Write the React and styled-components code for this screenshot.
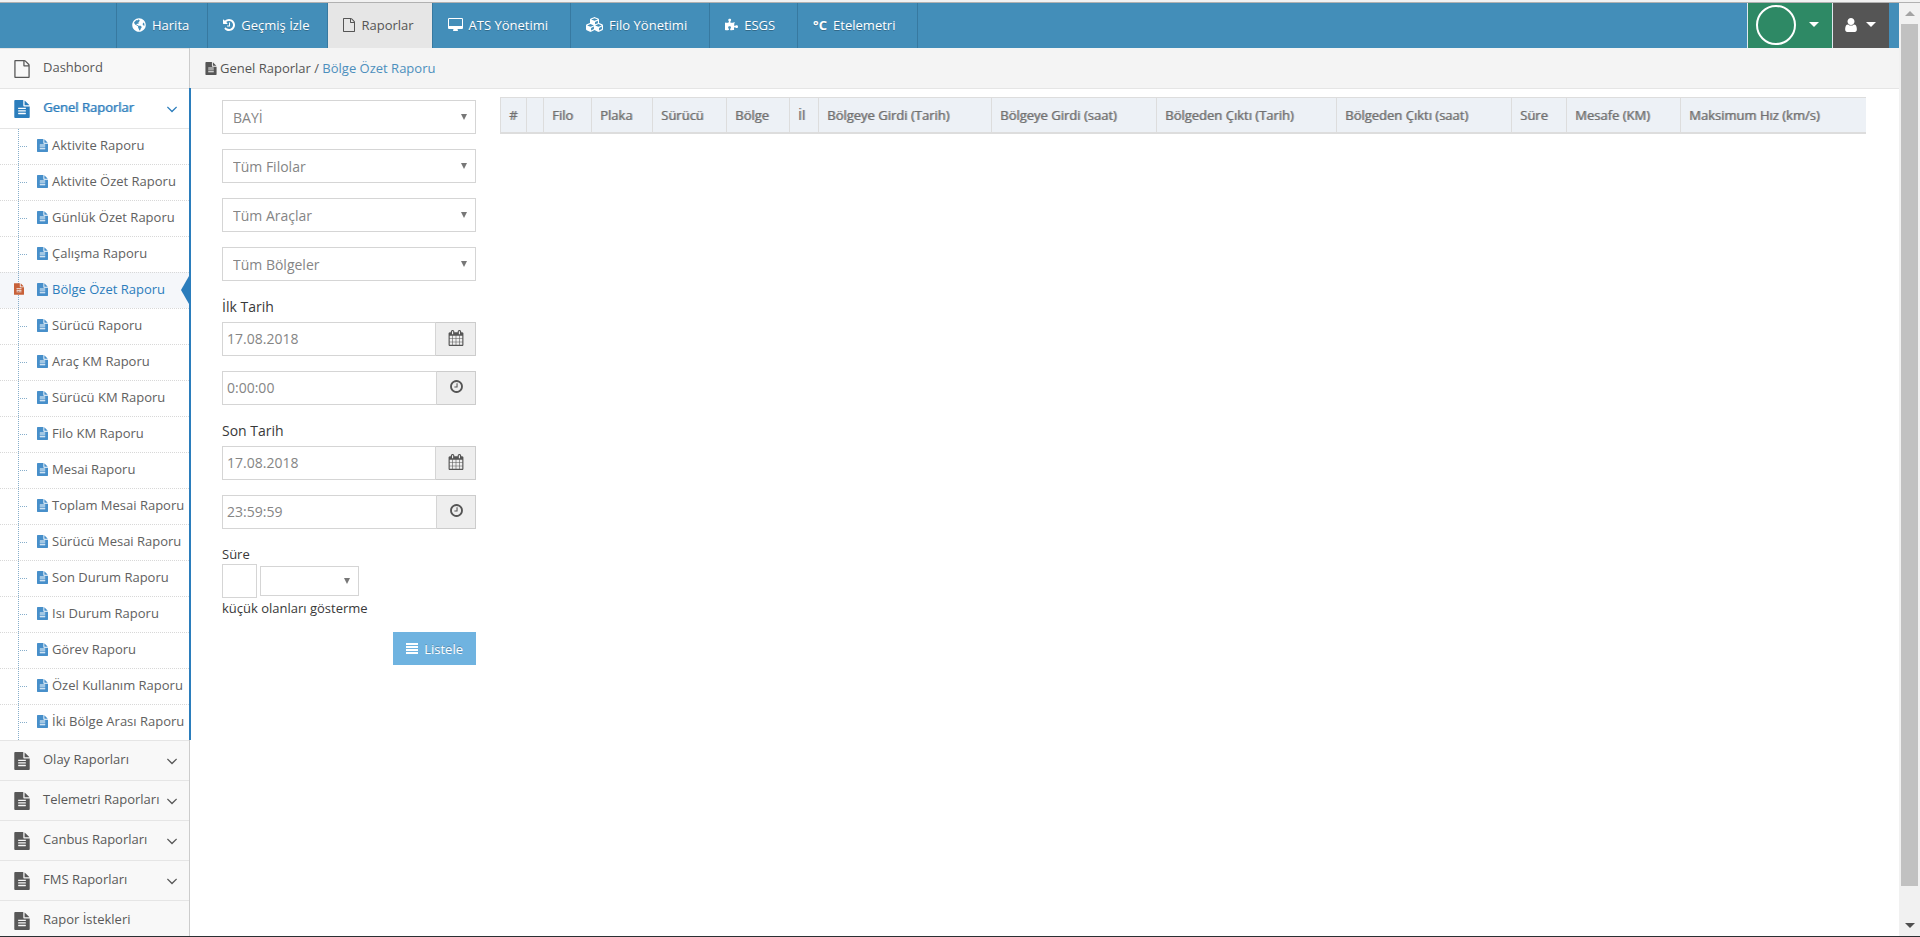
import React from 'react';
import styled, { createGlobalStyle, css } from 'styled-components';
import { FaGlobeAmericas, FaCubes, FaPuzzlePiece } from 'react-icons/fa';

const reports = [
  'Aktivite Raporu',
  'Aktivite Özet Raporu',
  'Günlük Özet Raporu',
  'Çalışma Raporu',
  'Bölge Özet Raporu',
  'Sürücü Raporu',
  'Araç KM Raporu',
  'Sürücü KM Raporu',
  'Filo KM Raporu',
  'Mesai Raporu',
  'Toplam Mesai Raporu',
  'Sürücü Mesai Raporu',
  'Son Durum Raporu',
  'Isı Durum Raporu',
  'Görev Raporu',
  'Özel Kullanım Raporu',
  'İki Bölge Arası Raporu',
];

const groups = [
  'Olay Raporları',
  'Telemetri Raporları',
  'Canbus Raporları',
  'FMS Raporları',
];

// width is a share: the table stretches the columns to fill the page
const columns = [
  { title: '#', width: 26 },
  { title: '', width: 17 },
  { title: 'Filo', width: 48 },
  { title: 'Plaka', width: 61 },
  { title: 'Sürücü', width: 74 },
  { title: 'Bölge', width: 63 },
  { title: 'İl', width: 29 },
  { title: 'Bölgeye Girdi (Tarih)', width: 173 },
  { title: 'Bölgeye Girdi (saat)', width: 165 },
  { title: 'Bölgeden Çıktı (Tarih)', width: 180 },
  { title: 'Bölgeden Çıktı (saat)', width: 175 },
  { title: 'Süre', width: 55 },
  { title: 'Mesafe (KM)', width: 114 },
  { title: 'Maksimum Hız (km/s)', width: 186 },
];

const paths = {
  file: 'M1596 380q28 28 48 76t20 88v1152q0 40-28 68t-68 28h-1344q-40 0-68-28t-28-68v-1600q0-40 28-68t68-28h896q40 0 88 20t76 48zm-444-244v376h376q-10-29-22-41l-313-313q-12-12-41-22zm384 1528v-1024h-416q-40 0-68-28t-28-68v-416h-768v1536h1280z',
  fileText:
    'M1596 476q14 14 28 36h-472v-472q22 14 36 28zm-476 164h544v1056q0 40-28 68t-68 28h-1344q-40 0-68-28t-28-68v-1600q0-40 28-68t68-28h800v544q0 40 28 68t68 28zm160 736v-64q0-14-9-23t-23-9h-704q-14 0-23 9t-9 23v64q0 14 9 23t23 9h704q14 0 23-9t9-23zm0-256v-64q0-14-9-23t-23-9h-704q-14 0-23 9t-9 23v64q0 14 9 23t23 9h704q14 0 23-9t9-23zm0-256v-64q0-14-9-23t-23-9h-704q-14 0-23 9t-9 23v64q0 14 9 23t23 9h704q14 0 23-9t9-23z',
  history:
    'M1664 896q0 156-61 298t-164 245-245 164-298 61q-172 0-327-72.5t-264-204.5q-7-10-6.5-22.5t8.5-20.5l137-138q10-9 25-9 16 2 23 12 73 95 179 147t225 52q104 0 198.5-40.5t163.5-109.5 109.5-163.5 40.5-198.5-40.5-198.5-109.5-163.5-163.5-109.5-198.5-40.5q-98 0-188 35.5t-160 101.5l137 138q31 30 14 69-17 40-59 40h-448q-26 0-45-19t-19-45v-448q0-42 40-59 39-17 69 14l130 129q107-101 244.5-156.5t284.5-55.5q156 0 298 61t245 164 164 245 61 298zm-640-288v448q0 14-9 23t-23 9h-320q-14 0-23-9t-9-23v-64q0-14 9-23t23-9h224v-352q0-14 9-23t23-9h64q14 0 23 9t9 23z',
  desktop:
    'M1728 992v-832q0-13-9.5-22.5t-22.5-9.5h-1600q-13 0-22.5 9.5t-9.5 22.5v832q0 13 9.5 22.5t22.5 9.5h1600q13 0 22.5-9.5t9.5-22.5zm128-832v1088q0 66-47 113t-113 47h-544q0 37 16 77.5t32 71 16 43.5q0 26-19 45t-45 19h-512q-26 0-45-19t-19-45q0-14 16-44t32-70 16-78h-544q-66 0-113-47t-47-113v-1088q0-66 47-113t113-47h1600q66 0 113 47t47 113z',
  user: 'M1536 1399q0 109-62.5 187t-150.5 78h-854q-88 0-150.5-78t-62.5-187q0-85 8.5-160.5t31.5-152 58.5-131 94-89 134.5-34.5q131 128 313 128t313-128q76 0 134.5 34.5t94 89 58.5 131 31.5 152 8.5 160.5zm-256-887q0 159-112.5 271.5t-271.5 112.5-271.5-112.5-112.5-271.5 112.5-271.5 271.5-112.5 271.5 112.5 112.5 271.5z',
  clock:
    'M1024 544v448q0 14-9 23t-23 9h-320q-14 0-23-9t-9-23v-64q0-14 9-23t23-9h224v-352q0-14 9-23t23-9h64q14 0 23 9t9 23zm416 352q0-148-73-273t-198-198-273-73-273 73-198 198-73 273 73 273 198 198 273 73 273-73 198-198 73-273zm224 0q0 209-103 385.5t-279.5 279.5-385.5 103-385.5-103-279.5-279.5-103-385.5 103-385.5 279.5-279.5 385.5-103 385.5 103 279.5 279.5 103 385.5z',
  calendar:
    'M192 1664h288v-288h-288v288zm352 0h320v-288h-320v288zm-352-352h288v-320h-288v320zm352 0h320v-320h-320v320zm-352-384h288v-288h-288v288zm736 736h320v-288h-320v288zm-384-736h320v-288h-320v288zm768 736h288v-288h-288v288zm-384-352h320v-320h-320v320zm-352-864v-288q0-13-9.5-22.5t-22.5-9.5h-64q-13 0-22.5 9.5t-9.5 22.5v288q0 13 9.5 22.5t22.5 9.5h64q13 0 22.5-9.5t9.5-22.5zm736 864h288v-320h-288v320zm-384-384h320v-288h-320v288zm384 0h288v-288h-288v288zm32-480v-288q0-13-9.5-22.5t-22.5-9.5h-64q-13 0-22.5 9.5t-9.5 22.5v288q0 13 9.5 22.5t22.5 9.5h64q13 0 22.5-9.5t9.5-22.5zm384-64v1280q0 52-38 90t-90 38h-1408q-52 0-90-38t-38-90v-1280q0-52 38-90t90-38h128v-96q0-66 47-113t113-47h64q66 0 113 47t47 113v96h384v-96q0-66 47-113t113-47h64q66 0 113 47t47 113v96h128q52 0 90 38t38 90z',
  angleDown:
    'M1395 736q0 13-10 23l-466 466q-10 10-23 10t-23-10l-466-466q-10-10-10-23t10-23l50-50q10-10 23-10t23 10l393 393 393-393q10-10 23-10t23 10l50 50q10 10 10 23z',
  justify: 'M0 0h12v2h-12zM0 3h12v2h-12zM0 6h12v2h-12zM0 9h12v2h-12z',
};

const Icon = ({ name, width, height, box = '0 0 1792 1792' }) => (
  <Glyph width={width} height={height || width} viewBox={box} aria-hidden="true">
    <path d={paths[name]} />
  </Glyph>
);

// the page shape takes 1536 of the 1792 units, so crop the box to it
const FileIcon = ({ name = 'fileText', width, height }) => (
  <Icon name={name} width={width} height={height} box="128 0 1536 1792" />
);

const Caret = ({ up, width = 10, height = 5 }) => (
  <Glyph width={width} height={height} viewBox="0 0 10 5" preserveAspectRatio="none" aria-hidden="true">
    <path d={up ? 'M0 5h10L5 0z' : 'M0 0h10L5 5z'} />
  </Glyph>
);

const SelectBox = ({ label, value, small }) => (
  <SelectWrap $small={small}>
    <Select aria-label={label} $small={small} defaultValue={value}>
      <option>{value}</option>
    </Select>
    <SelectArrow>
      <Caret width={6} height={6} />
    </SelectArrow>
  </SelectWrap>
);

const InputGroup = ({ id, label, value, icon }) => (
  <Group>
    <Input id={id} aria-label={label} defaultValue={value} />
    <Addon type="button" aria-label={icon === 'clock' ? 'Saat seç' : 'Tarih seç'} $narrow={icon === 'clock'}>
      <Icon name={icon} width={icon === 'clock' ? 15 : 16} />
    </Addon>
  </Group>
);

const Sidebar = () => (
  <Side>
    <MenuItem>
      <MenuLink href="#">
        <FileIcon name="file" width={16} height={18} />
        <MenuText>Dashbord</MenuText>
      </MenuLink>
    </MenuItem>
    <MenuItem $open>
      <MenuLink href="#" $open>
        <FileIcon width={16} height={18} />
        <MenuText>Genel Raporlar</MenuText>
        <Icon name="angleDown" width={18} />
      </MenuLink>
      <Submenu>
        {reports.map((name) => {
          const active = name === 'Bölge Özet Raporu';
          return (
            <SubItem key={name} $active={active}>
              <SubLink href="#" $active={active}>
                {active && (
                  <ActiveMark>
                    <FileIcon width={10} height={12} />
                  </ActiveMark>
                )}
                <SubIcon>
                  <FileIcon width={11} height={13} />
                </SubIcon>
                {name}
              </SubLink>
            </SubItem>
          );
        })}
      </Submenu>
    </MenuItem>
    {groups.map((name) => (
      <MenuItem key={name}>
        <MenuLink href="#">
          <FileIcon width={16} height={18} />
          <MenuText>{name}</MenuText>
          <Icon name="angleDown" width={18} />
        </MenuLink>
      </MenuItem>
    ))}
    <MenuItem>
      <MenuLink href="#">
        <FileIcon width={16} height={18} />
        <MenuText>Rapor İstekleri</MenuText>
      </MenuLink>
    </MenuItem>
  </Side>
);

const Filters = () => (
  <Form onSubmit={(e) => e.preventDefault()}>
    <SelectBox label="Bayi" value="BAYİ" />
    <SelectBox label="Filo" value="Tüm Filolar" />
    <SelectBox label="Araç" value="Tüm Araçlar" />
    <SelectBox label="Bölge" value="Tüm Bölgeler" />
    <Label htmlFor="first-date">İlk Tarih</Label>
    <InputGroup id="first-date" value="17.08.2018" icon="calendar" />
    <InputGroup id="first-time" label="İlk saat" value="0:00:00" icon="clock" />
    <Label htmlFor="last-date">Son Tarih</Label>
    <InputGroup id="last-date" value="17.08.2018" icon="calendar" />
    <InputGroup id="last-time" label="Son saat" value="23:59:59" icon="clock" />
    <DurationLabel htmlFor="duration">Süre</DurationLabel>
    <Duration>
      <DurationInput id="duration" />
      <SelectBox label="Süre birimi" value="" small />
    </Duration>
    <span>küçük olanları gösterme</span>
    <Submit type="submit">
      <Icon name="justify" width={12} height={11} box="0 0 12 11" />
      Listele
    </Submit>
  </Form>
);

const App = () => (
  <>
    <GlobalStyle />
    <Frame>
      <Window>
        <Page>
          <Navbar>
            <Brand />
            <NavLink href="#">
              <FaGlobeAmericas size={14} />
              Harita
            </NavLink>
            <NavLink href="#">
              <Icon name="history" width={12} box="128 128 1536 1536" />
              Geçmiş İzle
            </NavLink>
            <NavLink href="#" $active>
              <FileIcon name="file" width={12} height={14} />
              Raporlar
            </NavLink>
            <NavLink href="#" $wide>
              <Icon name="desktop" width={15} height={14} box="-64 0 1920 1792" />
              ATS Yönetimi
            </NavLink>
            <NavLink href="#" $wide>
              <FaCubes size={17} />
              Filo Yönetimi
            </NavLink>
            <NavLink href="#" $wide>
              <FaPuzzlePiece size={13} />
              ESGS
            </NavLink>
            <NavLink href="#" $wide $last>
              <Degree>°C</Degree>
              Etelemetri
            </NavLink>
            <NavRight>
              <NavButton type="button" aria-label="Firma" $color="#2e8965">
                <Avatar />
                <Caret />
              </NavButton>
              <NavButton type="button" aria-label="Kullanıcı" $color="#555">
                <Icon name="user" width={14} box="256 128 1280 1536" />
                <Caret />
              </NavButton>
            </NavRight>
          </Navbar>
          <Body>
            <Sidebar />
            <Main>
              <Breadcrumb>
                <FileIcon width={12} height={13} />
                <span>
                  Genel Raporlar / <Crumb href="#">Bölge Özet Raporu</Crumb>
                </span>
              </Breadcrumb>
              <Content>
                <Filters />
                <TableWrap>
                  <Table>
                    <colgroup>
                      {columns.map((col, i) => (
                        <col key={i} style={{ width: col.width }} />
                      ))}
                    </colgroup>
                    <thead>
                      <tr>
                        {columns.map((col, i) => (
                          <Th key={i} scope="col">
                            {col.title}
                          </Th>
                        ))}
                      </tr>
                    </thead>
                  </Table>
                </TableWrap>
              </Content>
            </Main>
          </Body>
        </Page>
        <Scrollbar aria-hidden="true">
          <ScrollEnd $color="#a3a3a3">
            <Caret up />
          </ScrollEnd>
          <Track>
            <Thumb />
          </Track>
          <ScrollEnd $color="#505050">
            <Caret />
          </ScrollEnd>
        </Scrollbar>
      </Window>
    </Frame>
  </>
);

export default App;

const GlobalStyle = createGlobalStyle`
  *, *::before, *::after {
    box-sizing: border-box;
  }

  body {
    margin: 0;
    background: #fff;
    color: #393939;
    font-family: 'Open Sans', 'Noto Sans', sans-serif;
    font-size: 13px;
    line-height: 20px;
  }

  a {
    color: inherit;
    text-decoration: none;
  }

  button, input, select {
    font: inherit;
    border-radius: 0;
    margin: 0;
  }
`;

// thickens the regular face sideways without widening it
const heavy = (shade) => css`
  font-weight: 400;
  text-shadow: 1px 0 0 ${shade};
`;

const Glyph = styled.svg`
  display: block;
  flex: none;
  fill: currentColor;
`;

const Frame = styled.div`
  display: flex;
  flex-direction: column;
  height: 100vh;
  overflow: hidden;
  padding-top: 2px;
  background: #f2f2f2;
  border-bottom: 1px solid #2b3033;
`;

const Window = styled.div`
  display: flex;
  flex: 1;
  min-height: 0;
  border-top: 1px solid #b1b1b1;
`;

const Page = styled.div`
  flex: 1;
  min-width: 0;
  overflow: hidden;
  background: #fff;
`;

const Navbar = styled.header`
  display: flex;
  height: 45px;
  background: #438eb9;
  color: #fff;
`;

const Brand = styled.div`
  width: 116px;
`;

const NavLink = styled.a`
  display: flex;
  align-items: center;
  gap: 6px;
  padding: 0 ${(props) => (props.$wide ? 22 : 18)}px 2px 15px;
  border-left: 1px solid #3779a0;
  white-space: nowrap;
  text-shadow: 0 1px 0 rgba(0, 0, 0, 0.25);

  ${(props) =>
    props.$last &&
    css`
      border-right: 1px solid #3779a0;
    `}

  ${(props) =>
    props.$active &&
    css`
      background: #e6e6e6;
      color: #555;
      text-shadow: none;
    `}
`;

const Degree = styled.span`
  width: 14px;
  font-weight: 700;
`;

const NavRight = styled.div`
  display: flex;
  margin-left: auto;
  padding-right: 10px;
`;

const NavButton = styled.button`
  display: flex;
  align-items: center;
  gap: 8px;
  padding: 0 13px 2px 11px;
  border: 0;
  border-left: 1px solid #e1e9ee;
  background: ${(props) => props.$color};
  color: #fff;
`;

const Avatar = styled.span`
  width: 40px;
  height: 40px;
  margin: 0 5px 0 -3px;
  border: 2px solid #fff;
  border-radius: 50%;
`;

const Body = styled.div`
  display: flex;
  align-items: flex-start;
`;

const Side = styled.nav`
  flex: none;
  width: 190px;
  border-right: 1px solid #ccc;
  background: #f8f8f8;
`;

const MenuItem = styled.div`
  border-top: 1px solid #e5e5e5;

  ${(props) =>
    props.$open &&
    css`
      position: relative;
      background: #fff;

      &::after {
        content: '';
        position: absolute;
        top: -1px;
        right: -2px;
        bottom: 0;
        width: 2px;
        background: #2b7dbc;
      }
    `}
`;

const MenuLink = styled.a`
  display: flex;
  align-items: center;
  height: 39px;
  padding: 0 8px 0 14px;
  color: #585858;

  ${(props) =>
    props.$open &&
    css`
      color: #2b7dbc;
      ${heavy('rgba(43, 125, 188, 0.6)')}
    `}
`;

const MenuText = styled.span`
  flex: 1;
  padding: 0 0 3px 13px;
  white-space: nowrap;
`;

const Submenu = styled.ul`
  position: relative;
  margin: 0;
  padding: 0;
  list-style: none;
  border-top: 1px solid #e5e5e5;

  &::before {
    content: '';
    position: absolute;
    top: 0;
    bottom: 0;
    left: 18px;
    z-index: 1;
    border-left: 1px dotted #86aecb;
  }
`;

const SubItem = styled.li`
  position: relative;
  background: ${(props) => (props.$active ? '#f5f7fa' : 'transparent')};

  & + & {
    border-top: 1px dotted #d8d8d8;
  }

  &::before {
    content: '';
    position: absolute;
    top: 17px;
    left: 20px;
    width: 7px;
    border-top: 1px dotted #86aecb;
  }

  ${(props) =>
    props.$active &&
    css`
      &::before {
        display: none;
      }

      &::after {
        content: '';
        position: absolute;
        top: 3px;
        right: 0;
        border: solid transparent;
        border-width: 14px 8px 14px 0;
        border-right-color: #2b7dbc;
      }
    `}
`;

const SubLink = styled.a`
  display: flex;
  align-items: center;
  gap: 4px;
  height: 35px;
  padding: 0 0 3px 37px;
  white-space: nowrap;
  color: ${(props) => (props.$active ? '#2b7dbc' : '#616161')};
`;

const SubIcon = styled.span`
  color: #478fca;
`;

const ActiveMark = styled.span`
  position: absolute;
  left: 14px;
  z-index: 2;
  color: #c86139;
`;

const Main = styled.main`
  flex: 1;
  min-width: 0;
`;

const Breadcrumb = styled.div`
  display: flex;
  align-items: center;
  gap: 3px;
  height: 41px;
  padding-left: 15px;
  background: #f4f4f4;
  border-bottom: 1px solid #e5e5e5;
  color: #555;
`;

const Crumb = styled.a`
  color: #4c8fbd;
`;

const Content = styled.div`
  display: flex;
  align-items: flex-start;
  gap: 24px;
  padding: 8px 33px 0 32px;
`;

const Form = styled.form`
  flex: none;
  display: flex;
  flex-direction: column;
  width: 254px;
  padding-top: 3px;
`;

const field = css`
  border: 1px solid #d5d5d5;
  background: #fff;
  color: #858585;
  font-size: 14px;
  outline: 0;
`;

const SelectWrap = styled.div`
  position: relative;
  width: ${(props) => (props.$small ? '99px' : '100%')};
  margin-bottom: ${(props) => (props.$small ? 0 : 15)}px;
`;

const Select = styled.select`
  ${field}
  display: block;
  appearance: none;
  width: 100%;
  height: ${(props) => (props.$small ? 30 : 34)}px;
  padding: 2px 24px 0 10px;
`;

const SelectArrow = styled.span`
  position: absolute;
  top: calc(50% - 3px);
  right: 9px;
  color: #777;
  pointer-events: none;
`;

const Label = styled.label`
  height: 26px;
  font-size: 14px;
  line-height: 22px;
`;

const Group = styled.div`
  display: flex;
  height: 34px;
  margin-bottom: 15px;
`;

const Input = styled.input`
  ${field}
  flex: 1;
  min-width: 0;
  padding: 0 4px;
`;

const Addon = styled.button`
  display: flex;
  justify-content: center;
  align-items: center;
  width: ${(props) => (props.$narrow ? 39 : 40)}px;
  padding: 0 0 3px;
  border: 1px solid #ccc;
  border-left: 0;
  background: #eee;
  color: #555;
`;

const DurationLabel = styled.label`
  height: 20px;
`;

const Duration = styled.div`
  display: flex;
  align-items: center;
  gap: 3px;
`;

const DurationInput = styled.input`
  ${field}
  width: 35px;
  height: 34px;
  padding: 0 4px;
`;

const Submit = styled.button`
  display: flex;
  align-items: center;
  align-self: flex-end;
  gap: 6px;
  height: 33px;
  margin-top: 14px;
  padding: 0 13px;
  border: 0;
  background: #6fb3e0;
  color: #fff;
  text-shadow: 0 -1px 0 rgba(0, 0, 0, 0.25);
`;

const TableWrap = styled.div`
  flex: 1;
  min-width: 0;
`;

const Table = styled.table`
  width: 100%;
  border-spacing: 0;
`;

const Th = styled.th`
  height: 37px;
  padding: 0 0 0 8px;
  border: solid #ddd;
  border-width: 1px 0 2px 1px;
  background: #edf1f6;
  color: #707070;
  text-align: left;
  white-space: nowrap;
  ${heavy('rgba(112, 112, 112, 0.6)')}
`;

const Scrollbar = styled.div`
  display: flex;
  flex-direction: column;
  flex: none;
  width: 21px;
  padding: 0 2px;
  background: #f1f1f1;
`;

const ScrollEnd = styled.span`
  display: flex;
  justify-content: center;
  align-items: center;
  height: 21px;
  color: ${(props) => props.$color};
`;

const Track = styled.div`
  flex: 1;
`;

const Thumb = styled.div`
  height: calc(100% - 29px);
  background: #c1c1c1;
`;
